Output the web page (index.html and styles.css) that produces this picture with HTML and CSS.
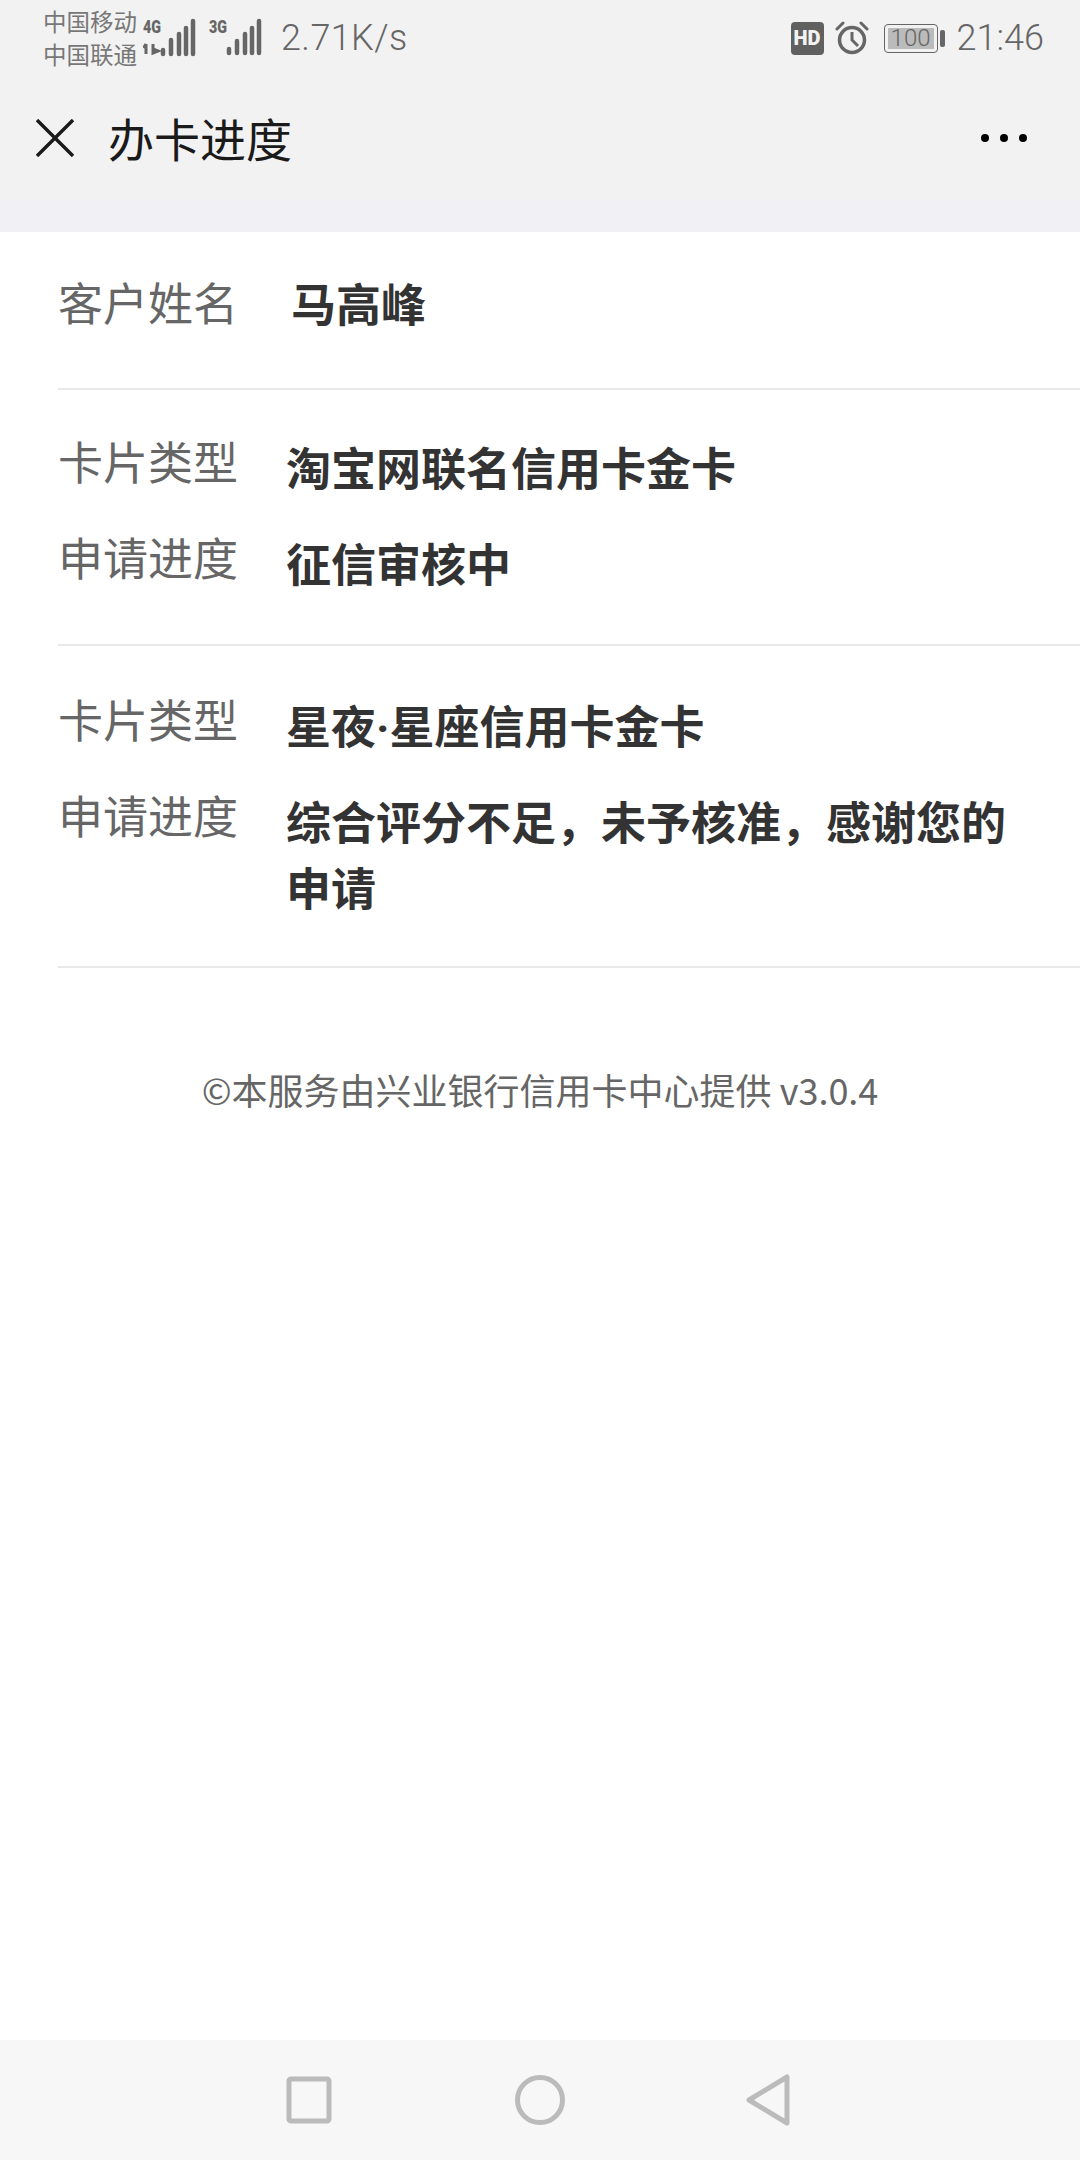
FILE: index.html
```html
<!DOCTYPE html>
<html>
<head>
    <title>办卡进度</title>
    <meta charset="utf-8">
    <link rel="stylesheet" href="styles.css">
</head>
<body>
    <div class="phone">
        <!-- Android status bar -->
        <div class="status-bar">
            <div class="status-left">
                <div class="carriers">
                    <span>中国移动</span>
                    <span>中国联通</span>
                </div>
                <svg class="sim sim-one" width="54" height="44" viewBox="0 -4 54 44">
                    <text x="0" y="13" class="sim-label" textLength="18" lengthAdjust="spacingAndGlyphs">4G</text>
                    <path d="M3 24v10M0.5 28l2.5-4M10 24v10M10 29l5 2-5 2z" class="sim-arrows"/>
                    <path d="M20 30v4M28 20v14M36 14v20M43 8v26M50 1v33" class="sim-bars"/>
                </svg>
                <svg class="sim sim-two" width="54" height="44" viewBox="0 -4 54 44">
                    <text x="0" y="13" class="sim-label" textLength="18" lengthAdjust="spacingAndGlyphs">3G</text>
                    <path d="M20 29v4M28 21v12M36 14v19M43 8v25M50 1v32" class="sim-bars"/>
                </svg>
                <span class="speed">2.71K/s</span>
            </div>
            <div class="status-right">
                <span class="hd-badge">HD</span>
                <svg class="alarm" width="34" height="34" viewBox="0 0 34 34">
                    <circle cx="17" cy="19" r="12.5" fill="none" stroke="#666" stroke-width="3.5"/>
                    <path d="M17 11v8l6 6" fill="none" stroke="#666" stroke-width="3"/>
                    <path d="M2 8l6-6M32 8l-6-6" fill="none" stroke="#666" stroke-width="3" stroke-linecap="round"/>
                </svg>
                <div class="battery">
                    <div class="battery-body"><span class="battery-level">100</span></div>
                    <div class="battery-nub"></div>
                </div>
                <span class="clock">21:46</span>
            </div>
        </div>

        <!-- title bar -->
        <div class="title-bar">
            <svg class="close-icon" width="38" height="38" viewBox="0 0 38 38">
                <path d="M1 1l36 36M37 1L1 37" fill="none" stroke="#1a1a1a" stroke-width="3.4"/>
            </svg>
            <h1 class="page-title">办卡进度</h1>
            <div class="more-dots">
                <span></span><span></span><span></span>
            </div>
        </div>
        <div class="strip"></div>

        <!-- content -->
        <div class="content">
            <div class="section section-name">
                <div class="row">
                    <div class="label label-name">客户姓名</div>
                    <div class="value value-name">马高峰</div>
                </div>
            </div>
            <div class="section section-first">
                <div class="row">
                    <div class="label">卡片类型</div>
                    <div class="value">淘宝网联名信用卡金卡</div>
                </div>
                <div class="row">
                    <div class="label">申请进度</div>
                    <div class="value">征信审核中</div>
                </div>
            </div>
            <div class="section">
                <div class="row">
                    <div class="label">卡片类型</div>
                    <div class="value">星夜<span class="latin-dot">·</span>星座信用卡金卡</div>
                </div>
                <div class="row">
                    <div class="label">申请进度</div>
                    <div class="value">综合评分不足&#xFF0C;未予核准&#xFF0C;感谢您的申请</div>
                </div>
            </div>
            <p class="footer-note">©本服务由兴业银行信用卡中心提供 v3.0.4</p>
        </div>

        <!-- android nav buttons -->
        <div class="nav-bar">
            <div class="nav-cell">
                <svg width="50" height="50" viewBox="0 0 50 50">
                    <rect x="4" y="4" width="40" height="42" rx="2" class="nav-shape"/>
                </svg>
            </div>
            <div class="nav-cell">
                <svg width="50" height="50" viewBox="0 0 50 50">
                    <circle cx="25" cy="25" r="22.5" class="nav-shape"/>
                </svg>
            </div>
            <div class="nav-cell">
                <svg width="50" height="54" viewBox="0 0 50 54">
                    <path d="M42 4v46L4 27z" class="nav-shape"/>
                </svg>
            </div>
        </div>
    </div>
</body>
</html>
```

FILE: styles.css
```css
* {
    box-sizing: border-box;
}

body {
    margin: 0;
    background-color: #fff;
    font-family: "Noto Sans CJK SC", "Noto Sans", Roboto, sans-serif;
}

.phone {
    display: flex;
    flex-direction: column;
    width: 1080px;
    height: 2160px;
}

/* Status bar */
.status-bar {
    display: flex;
    justify-content: space-between;
    align-items: center;
    flex: none;
    height: 76px;
    padding: 0 36px 0 43px;
    background-color: #f2f2f2;
    color: #666;
}

.status-left,
.status-right {
    display: flex;
    align-items: center;
}

.carriers {
    display: flex;
    flex-direction: column;
    font-size: 23.5px;
    line-height: 33px;
    color: #777;
}

.sim-one {
    margin-left: 6px;
}

.sim-two {
    margin-left: 12px;
}

.sim-label {
    font-family: Roboto, sans-serif;
    font-size: 18px;
    font-weight: 900;
    fill: #666;
}

.sim-arrows {
    fill: none;
    stroke: #666;
    stroke-width: 3;
}

.sim-bars {
    fill: none;
    stroke: #666;
    stroke-width: 4.5;
    stroke-linecap: round;
}

.speed {
    margin-left: 18px;
    font-family: Roboto, sans-serif;
    font-size: 36px;
    font-weight: 300;
    letter-spacing: 0.4px;
}

.hd-badge {
    width: 33px;
    height: 33px;
    border-radius: 4px;
    background-color: #606060;
    color: #f2f2f2;
    font-family: Roboto, sans-serif;
    font-size: 20px;
    font-weight: 900;
    line-height: 33px;
    text-align: center;
}

.alarm {
    margin-left: 11px;
}

.battery {
    display: flex;
    align-items: center;
    margin-left: 15px;
}

.battery-body {
    width: 54px;
    height: 29px;
    padding: 3px;
    border: 1px solid #666;
    border-radius: 4px;
}

.battery-level {
    display: block;
    height: 21px;
    background-color: #bbb;
    font-family: Roboto, sans-serif;
    font-size: 24px;
    font-weight: 300;
    line-height: 21px;
    text-align: center;
}

.battery-nub {
    width: 5px;
    height: 17px;
    margin-left: 2px;
    border-radius: 2px;
    background-color: #666;
}

.clock {
    margin-left: 12px;
    font-family: Roboto, sans-serif;
    font-size: 36px;
    font-weight: 300;
}

/* Title bar */
.title-bar {
    display: flex;
    align-items: center;
    flex: none;
    height: 124px;
    padding: 0 53px 0 36px;
    background-color: #f2f2f2;
}

.page-title {
    margin: 0 0 2px 34px;
    font-size: 46px;
    font-weight: 400;
    line-height: 60px;
    color: #1a1a1a;
}

.more-dots {
    display: flex;
    gap: 11px;
    margin-left: auto;
}

.more-dots span {
    width: 8px;
    height: 8px;
    border-radius: 50%;
    background-color: #000;
}

.strip {
    flex: none;
    height: 32px;
    background-color: #f0f0f5;
}

/* Content */
.content {
    flex: 1;
}

.section {
    display: flex;
    flex-direction: column;
    gap: 30px;
    margin-left: 58px;
    padding: 46px 0;
    border-bottom: 2px solid #e9e9e9;
}

.section-name {
    padding: 38px 0 52px;
}

.section-first {
    padding: 44px 0 48px;
}

.row {
    display: grid;
    grid-template-columns: 228px 1fr;
}

.label {
    font-size: 45px;
    line-height: 53px;
    color: #666;
}

.label-name {
    line-height: 64px;
}

.value {
    padding-right: 50px;
    font-size: 45px;
    font-weight: 700;
    line-height: 66px;
    color: #333;
}

.value-name {
    padding-left: 5px;
}

.latin-dot {
    font-family: Roboto, sans-serif;
    line-height: 1;
}

.footer-note {
    margin: 96px 0 0;
    font-size: 36px;
    line-height: 50px;
    color: #666;
    text-align: center;
}

/* Nav buttons */
.nav-bar {
    display: flex;
    justify-content: center;
    align-items: center;
    flex: none;
    height: 120px;
    background-color: #f7f7f7;
}

.nav-cell {
    display: flex;
    justify-content: center;
    width: 230px;
}

.nav-shape {
    fill: none;
    stroke: #bbb;
    stroke-width: 5;
    stroke-linejoin: round;
}
```
